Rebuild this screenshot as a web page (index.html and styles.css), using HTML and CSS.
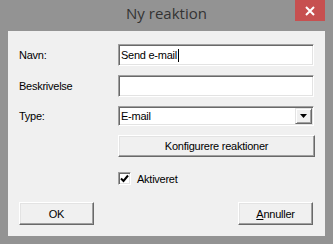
FILE: index.html
```html
<!DOCTYPE html>
<html lang="da">
  <head>
    <meta charset="UTF-8" />
    <title>Ny reaktion</title>
    <link rel="stylesheet" href="styles.css">
  </head>
  <body>
    <div class="window">
      <div class="titlebar">
        <span class="title">Ny reaktion</span>
        <div class="close-btn">
          <svg width="10" height="10" viewBox="0 0 10 10">
            <path d="M1 1 L9 9 M9 1 L1 9" stroke="#fff" stroke-width="2" fill="none" />
          </svg>
        </div>
      </div>

      <div class="client">
        <div class="field">
          <label>Navn:</label>
          <div class="textbox">Send e-mail<span class="caret"></span></div>
        </div>

        <div class="field">
          <label>Beskrivelse</label>
          <div class="textbox"></div>
        </div>

        <div class="field field-select">
          <label>Type:</label>
          <div class="select">
            <span class="select-value">E-mail</span>
            <span class="select-arrow">
              <svg width="7" height="4" viewBox="0 0 7 4">
                <path d="M0 0 H7 L3.5 4 Z" fill="#000" />
              </svg>
            </span>
          </div>
        </div>

        <button class="btn btn-wide">Konfigurere reaktioner</button>

        <div class="check-row">
          <span class="checkbox">
            <svg width="9" height="9" viewBox="0 0 9 9">
              <path d="M1 4.5 L3.5 7 L8 1.5" stroke="#000" stroke-width="2" fill="none" />
            </svg>
          </span>
          <span>Aktiveret</span>
        </div>

        <div class="actions">
          <button class="btn btn-dialog">OK</button>
          <button class="btn btn-dialog"><u>A</u>nnuller</button>
        </div>
      </div>
    </div>
  </body>
</html>
```

FILE: styles.css
```css
body {
  margin: 0;
  background: #939393;
  font-family: "Liberation Sans", Arial, sans-serif;
  font-size: 11px;
  letter-spacing: -0.25px;
  color: #000;
}

.window {
  width: 333px;
  height: 244px;
  box-sizing: border-box;
  padding: 0 8px 8px;
  display: flex;
  flex-direction: column;
}

.titlebar {
  height: 31px;
  position: relative;
  display: flex;
  justify-content: center;
}

.title {
  font-family: "Open Sans", sans-serif;
  font-size: 15px;
  letter-spacing: 0;
  color: #333;
  line-height: 20px;
  margin-top: 3px;
}

.close-btn {
  position: absolute;
  top: 0;
  right: 0;
  width: 30px;
  height: 21px;
  background: #c75050;
  display: flex;
  align-items: center;
  justify-content: center;
}

.client {
  flex: 1;
  background: #f0f0f0;
  padding: 13px 11px 11px;
  display: flex;
  flex-direction: column;
}

.field {
  display: flex;
  align-items: center;
  margin-bottom: 9px;
}

.field label {
  width: 99px;
}

.textbox,
.select {
  width: 196px;
  height: 22px;
  box-sizing: border-box;
  background: #fff;
  border: 1px solid;
  border-color: #a0a0a0 #fff #fff #a0a0a0;
  box-shadow: inset 1px 1px #696969, inset -1px -1px #e3e3e3;
  padding: 0 2px;
  display: flex;
  align-items: center;
}

.caret {
  display: inline-block;
  width: 1px;
  height: 13px;
  background: #000;
  margin-left: 1px;
}

.select {
  height: 20px;
  padding-right: 1px;
}

.select-value {
  flex: 1;
}

.select-arrow {
  width: 17px;
  height: 16px;
  box-sizing: border-box;
  background: #f0f0f0;
  border: 1px solid;
  border-color: #e3e3e3 #696969 #696969 #e3e3e3;
  box-shadow: inset 1px 1px #fff, inset -1px -1px #a0a0a0;
  display: flex;
  align-items: center;
  justify-content: center;
}

.btn {
  font-family: inherit;
  font-size: 11px;
  letter-spacing: -0.25px;
  color: #000;
  background: #f0f0f0;
  border: 1px solid;
  border-color: #fff #696969 #696969 #fff;
  box-shadow: inset -1px -1px #a0a0a0, inset 1px 1px #e3e3e3;
  padding: 0;
  box-sizing: border-box;
}

.btn-wide {
  margin-left: 99px;
  width: 197px;
  height: 22px;
}

.check-row {
  display: flex;
  align-items: center;
  gap: 6px;
  margin: 15px 0 0 99px;
  height: 13px;
}

.checkbox {
  width: 13px;
  height: 13px;
  box-sizing: border-box;
  background: #fff;
  border: 1px solid;
  border-color: #a0a0a0 #fff #fff #a0a0a0;
  box-shadow: inset 1px 1px #696969, inset -1px -1px #e3e3e3;
  display: flex;
  align-items: center;
  justify-content: center;
}

.actions {
  margin-top: auto;
  display: flex;
  justify-content: space-between;
  padding-right: 1px;
}

.btn-dialog {
  width: 75px;
  height: 23px;
}
```
